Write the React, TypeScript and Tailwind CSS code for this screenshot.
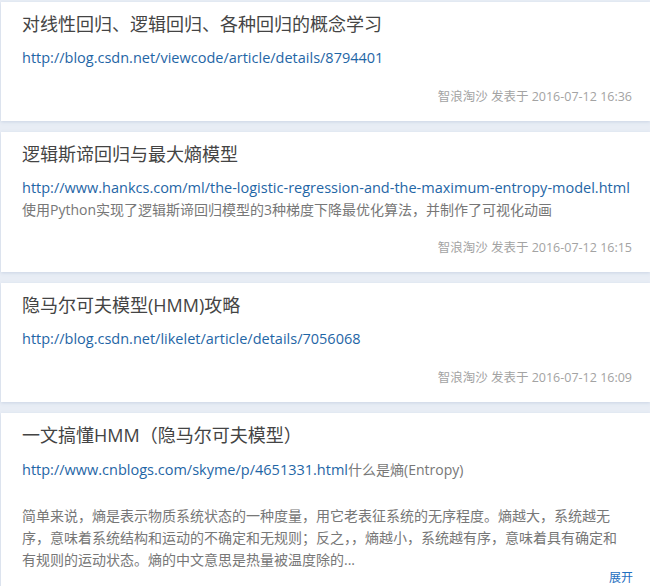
import React from "react";

const FONT = '"Open Sans", "Noto Sans CJK SC", sans-serif';

type Item = {
  title: string;
  url: string;
  desc?: string;
  time: string;
};

const items: Item[] = [
  {
    title: "对线性回归、逻辑回归、各种回归的概念学习",
    url: "http://blog.csdn.net/viewcode/article/details/8794401",
    time: "2016-07-12 16:36",
  },
  {
    title: "逻辑斯谛回归与最大熵模型",
    url: "http://www.hankcs.com/ml/the-logistic-regression-and-the-maximum-entropy-model.html",
    desc: "使用Python实现了逻辑斯谛回归模型的3种梯度下降最优化算法，并制作了可视化动画",
    time: "2016-07-12 16:15",
  },
  {
    title: "隐马尔可夫模型(HMM)攻略",
    url: "http://blog.csdn.net/likelet/article/details/7056068",
    time: "2016-07-12 16:09",
  },
];

function Card({ item }: { item: Item }) {
  return (
    <div className="bg-white ml-[1px] pl-[21px] pr-[18px] pt-[9px] pb-[15px] shadow-[0_1px_3px_rgba(150,170,200,0.35)]">
      <div className="text-[18px] leading-[27px] text-[#444]">{item.title}</div>
      <div className="mt-[9px] text-[14.5px] leading-[22px] text-[#1f66a6] whitespace-nowrap">{item.url}</div>
      {item.desc && <div className="text-[14px] leading-[21px] text-[#777]">{item.desc}</div>}
      <div className="mt-[19px] text-right text-[12.5px] leading-[18px] text-[#a3a3a3]">
        智浪淘沙 发表于 {item.time}
      </div>
    </div>
  );
}

export default function App() {
  return (
    <div className="w-[650px] h-[586px] overflow-hidden bg-[#e8edf5] pt-[2px]" style={{ fontFamily: FONT }}>
      <div className="flex flex-col gap-[11px]">
        {items.map((it, i) => (
          <Card key={i} item={it} />
        ))}
        <div className="bg-white ml-[1px] pl-[21px] pr-[17px] pt-[9px] pb-[14px] shadow-[0_1px_3px_rgba(150,170,200,0.35)]">
          <div className="text-[18px] leading-[27px] text-[#444]">一文搞懂HMM（隐马尔可夫模型）</div>
          <div className="mt-[10px] text-[14px] leading-[22px] text-[#777]">
            <span className="text-[14.5px] text-[#1f66a6]">http://www.cnblogs.com/skyme/p/4651331.html</span>什么是熵(Entropy)
          </div>
          <div className="h-[24px]" />
          <div className="text-[14px] leading-[22px] text-[#777] pr-[5px]">
            简单来说，熵是表示物质系统状态的一种度量，用它老表征系统的无序程度。熵越大，系统越无序，意味着系统结构和运动的不确定和无规则；反之，，熵越小，系统越有序，意味着具有确定和有规则的运动状态。熵的中文意思是热量被温度除的...
          </div>
          <div className="mt-[1px] text-right text-[12px] leading-[12px] text-[#1f6fc0]">展开</div>
        </div>
      </div>
    </div>
  );
}
